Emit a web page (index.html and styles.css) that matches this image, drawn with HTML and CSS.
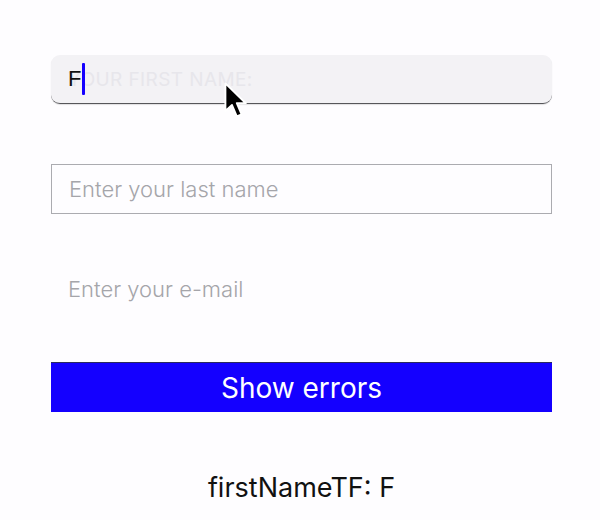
FILE: index.html
```html
<!DOCTYPE html>
<html>
<head>
<meta charset="utf-8">
<link rel="stylesheet" href="styles.css">
</head>
<body>
<div class="form">
  <div class="field field-active">
    <span class="float-placeholder">YOUR FIRST NAME:</span>
    <span class="typed">F</span><span class="caret"></span>
  </div>
  <div class="field field-bordered">
    <span class="placeholder">Enter your last name</span>
  </div>
  <div class="field field-plain">
    <span class="placeholder">Enter your e-mail</span>
  </div>
  <button class="btn">Show errors</button>
  <div class="status">firstNameTF: F</div>
</div>
<svg class="pointer" width="30" height="42" viewBox="0 0 25 35">
  <path d="M2 2 L2 25 L7.5 20 L11.5 29.5 L15.5 27.8 L11.5 18.5 L19 18.5 Z" fill="#000" stroke="#fff" stroke-width="1.6" stroke-linejoin="round"/>
</svg>
</body>
</html>
```
FILE: styles.css
```css
html, body {
  margin: 0;
  padding: 0;
  background: #fefdff;
}
body {
  font-family: Inter, "Liberation Sans", sans-serif;
  position: relative;
  width: 600px;
  height: 520px;
  overflow: hidden;
}
.form {
  display: flex;
  flex-direction: column;
  padding: 55px 48px 0 51px;
}
.field {
  position: relative;
  box-sizing: border-box;
  height: 50px;
  display: flex;
  align-items: center;
  padding-left: 17px;
}
.field-active {
  height: 49px;
  background: #f3f2f5;
  border-radius: 9px;
  border-bottom: 1px solid #56565a;
  box-shadow: 0 1px 1px rgba(0,0,0,0.12);
  margin-bottom: 60px;
}
.float-placeholder {
  position: absolute;
  left: 17px;
  top: 13px;
  font-size: 19px;
  color: #e7e6eb;
  letter-spacing: 0.4px;
}
.typed {
  position: relative;
  font-size: 22px;
  color: #111;
  font-family: "Liberation Sans", sans-serif;
}
.caret {
  position: relative;
  width: 3px;
  height: 32px;
  background: #1400ff;
  margin-left: 1px;
  border-radius: 1px;
}
.field-bordered {
  border: 1px solid #ababb0;
  margin-bottom: 50px;
}
.field-plain {
  margin-bottom: 48px;
}
.placeholder {
  font-size: 22px;
  font-weight: 300;
  color: #a5a5aa;
}
.btn {
  height: 50px;
  border: 0;
  border-top: 1px solid #2a2a60;
  background: #1400ff;
  color: #fff;
  font-family: Inter, "Liberation Sans", sans-serif;
  font-size: 28px;
  padding: 0;
  margin: 0 0 48px;
}
.status {
  text-align: center;
  font-size: 27px;
  color: #111;
  line-height: 56px;
}
.pointer {
  position: absolute;
  left: 223px;
  top: 81px;
}
```
